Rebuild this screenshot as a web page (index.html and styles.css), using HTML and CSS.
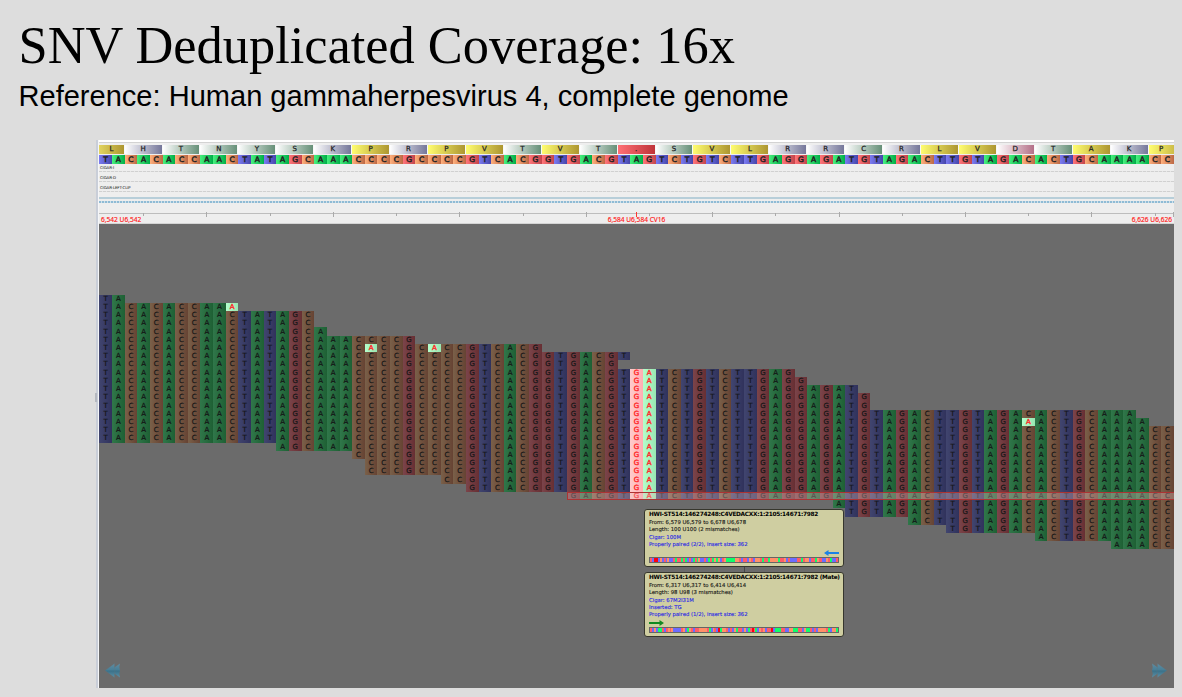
FILE: index.html
```html
<!DOCTYPE html>
<html lang="en">
<head>
<meta charset="utf-8">
<title>SNV Deduplicated Coverage</title>
<link rel="stylesheet" href="styles.css">
</head>
<body>
<header class="heading">
  <h1 class="title">SNV Deduplicated Coverage: 16x</h1>
  <p class="subtitle">Reference: Human gammaherpesvirus 4, complete genome</p>
</header>
<main class="viewer">
  <div class="splitter"><i class="grip"></i></div>
  <div class="content">
    <div class="tracks">
      <div class="topline"></div>
      <div class="aminos" id="aminos"></div>
      <div class="bases" id="bases"></div>
      <div class="cigar">CIGAR-I</div>
      <div class="cigar">CIGAR-D</div>
      <div class="cigar">CIGAR-LEFT-CLIP</div>
      <div class="coverage"></div>
      <div class="coverage-dots"></div>
      <div class="ruler" id="ruler"></div>
      <div class="positions"><span>6,542 U6,542</span><span>6,584 U6,584 CV16</span><span>6,626 U6,626</span></div>
    </div>
    <div class="pileup">
      <div id="reads"></div>
      <div class="cards">
        <section class="card first">
          <h2>HWI-ST514:146274248:C4VEDACXX:1:2105:14671:7982</h2>
          <p>From: 6,579 U6,579 to 6,678 U6,678</p>
          <p>Length: 100 U100 (2 mismatches)</p>
          <p class="blue">Cigar: 100M</p>
          <p class="blue">Properly paired (2/2), insert size: 362</p>
          <svg class="arrow left" viewBox="0 0 15 6"><path d="M15 2H4.500V0L0 3l4.500 3V4H15z" fill="#1b82e6"/></svg>
          <div class="strip" id="strip1"></div>
        </section>
        <div class="link"></div>
        <section class="card second">
          <h2>HWI-ST514:146274248:C4VEDACXX:1:2105:14671:7982 (Mate)</h2>
          <p>From: 6,317 U6,317 to 6,414 U6,414</p>
          <p>Length: 98 U98 (3 mismatches)</p>
          <p class="blue">Cigar: 67M2I31M</p>
          <p class="blue">Inserted: TG</p>
          <p class="blue">Properly paired (1/2), insert size: 362</p>
          <svg class="arrow" viewBox="0 0 15 6"><path d="M0 2H10.500V0L15 3l-4.500 3V4H0z" fill="#138a22"/></svg>
          <div class="strip" id="strip2"></div>
        </section>
      </div>
      <nav class="pager">
        <svg viewBox="0 0 15 15"><defs><linearGradient id="steel" x2="0" y2="1"><stop stop-color="#5f8da2"/><stop offset=".48" stop-color="#477e96"/><stop offset=".52" stop-color="#3a7088"/><stop offset="1" stop-color="#5b91a8"/></linearGradient></defs><path d="M15 .5L5 7.500l10 7-.7-3.500.7-3.500-.7-3.500z" fill="url(#steel)"/><path d="M9.500 .5L0 7.500l9.500 7V11l.5-3.500-.5-3.500z" fill="url(#steel)" stroke="#65757c" stroke-width=".3"/></svg>
        <svg viewBox="0 0 15 15"><path d="M0 .5l10 7-10 7L.7 11 0 7.500.7 4z" fill="url(#steel)"/><path d="M5.500 .5l9.500 7-9.500 7V11L5 7.500 5.500 4z" fill="url(#steel)" stroke="#65757c" stroke-width=".3"/></svg>
      </nav>
    </div>
  </div>
</main>
<script src="app.js"></script>
</body>
</html>
```
FILE: styles.css
```css
* { box-sizing: border-box; }
body { margin: 0; width: 1182px; height: 697px; overflow: hidden; background: #ddd; color: #000; font-family: "Liberation Sans", Arial, sans-serif; }
.heading { height: 140px; padding: 16px 0 0 18.500px; white-space: nowrap; }
.title { margin: 0; font: 400 52.400px/58px "Liberation Serif", "Times New Roman", serif; }
.subtitle { margin: 5px 0 0; font-size: 29.060px; line-height: 34px; }
.viewer { display: flex; width: 1078px; height: 548px; margin-left: 96px; }
.splitter { position: relative; width: 3px; background: linear-gradient(90deg, #c9ced8 0 2px, #f5f6f8 2px 3px); }
.grip { position: absolute; left: -1px; top: 253px; width: 2px; height: 9px; border: 1px solid #b4b8c0; }
.content { width: 1075px; }
.tracks { display: flex; flex-direction: column; height: 84px; background: #eee; border-top: 1px solid #fff; border-bottom: 1px solid #d4d4d4; font-family: "DejaVu Sans", sans-serif; overflow: hidden; }
.topline { height: 4px; background: linear-gradient(#fff 0 1px, #d3d3d3 1px 2px, #eee 2px); flex: none; }
.aminos, .bases, .read { display: grid; grid-template-columns: repeat(85, 12.643px); padding-left: .35px; }
.aminos { height: 8.500px; margin-bottom: 1.500px; flex: none; }
.aminos span, .bases span { display: flex; justify-content: center; align-items: center; font: 400 7px/8px "DejaVu Sans", sans-serif; color: #222; -webkit-text-stroke: .25px #222; }
.aminos span { border-right: 1px solid #f8f8f8; }
.bases { height: 9px; flex: none; }
.bases span { font-size: 7.500px; -webkit-text-stroke: .5px #222; }
.yellow { background: linear-gradient(90deg, #fffd70, #ad9631); }
.aminos .yellow:first-child { background: linear-gradient(90deg, #e2d460, #ad9631); }
.aminos .yellow:last-child { background: linear-gradient(90deg, #fffd70, #cdbd48); border: 0; }
.green { background: linear-gradient(90deg, #fff, #669078); }
.slate { background: linear-gradient(90deg, #fff, #75779a); }
.pink { background: linear-gradient(90deg, #fff, #b47088); }
.stop { background: linear-gradient(90deg, #ff7075, #bf3339); }
.bases .A { background: linear-gradient(90deg, #48f07f, #00ae48); }
.bases .C { background: linear-gradient(90deg, #ffb07d, #bc6844); }
.bases .G { background: linear-gradient(90deg, #ff757a, #c3454b); }
.bases .T { background: linear-gradient(90deg, #7b7bf2, #4545aa); }
.cigar { height: 9.900px; flex: none; padding: 1px 0 0 1px; font-size: 3.900px; line-height: 6px; letter-spacing: -.1px; color: #111; background: repeating-linear-gradient(90deg, #d0d0d0 0 3px, #e6e6e6 3px 4px) 0 7px / 100% 1px no-repeat; }
.coverage { height: 2px; margin-top: 3.300px; background: #b7ced9; flex: none; }
.coverage-dots { height: 2px; margin-top: 2px; flex: none; background: repeating-linear-gradient(90deg, #8fbbd5 0 2px, #d0e0e9 2px 3px); }
.ruler { position: relative; height: 4px; margin-top: 10px; border-top: 1px solid #bdbdbd; flex: none; }
.tick { position: absolute; top: -1px; width: 1px; height: 3px; background: #aaa; }
.tick.major { top: -2px; height: 5px; }
.tick.current { background: #f33; top: -2px; height: 5px; }
.positions { display: flex; justify-content: space-between; padding: 0 2px; color: #ff2020; font: 6.600px/6px "Noto Sans", sans-serif; -webkit-text-stroke: .15px #ff2020; white-space: nowrap; }
.pileup { position: relative; height: 464px; padding-top: 70.600px; background: #6b6b6b; }
.read { position: relative; height: 8.220px; }
.read span { display: flex; align-items: center; justify-content: center; font: 400 7px/8px "DejaVu Sans", sans-serif; color: #141516; -webkit-text-stroke: .2px currentColor; overflow: hidden; }
.read .A { background: linear-gradient(90deg, #30774a, #1e6034); }
.read .C { background: linear-gradient(90deg, #7a6049, #664333); }
.read .G { background: linear-gradient(90deg, #7b444a, #672f33); }
.read .T { background: linear-gradient(90deg, #41456f, #30325c); }
.read .snv { color: #ff2b2b; -webkit-text-stroke: .4px #ff2b2b; }
.read .snv.A { background: linear-gradient(90deg, #b4ffcc, #98e6b2); }
.read .snv.G { background: linear-gradient(90deg, #ffcccc, #ffadb2); }
.read.selected::after { content: ""; position: absolute; left: 467.500px; right: 0; top: 0; bottom: 0; background: rgba(230, 190, 190, .35); border: 1px solid #ad3334; border-right: 0; }
.cards { position: absolute; left: 545px; top: 285px; width: 200px; font-family: "DejaVu Sans", sans-serif; }
.card { display: flex; flex-direction: column; background: #cfcea1; border: 1px solid #36362d; border-radius: 3px; padding: 1px 4px 3px 4px; white-space: nowrap; }
.first { height: 58px; }
.second { height: 65px; }
.link { width: 1px; height: 5px; margin-left: 100px; background: #454545; }
.card h2 { margin: 0 0 .5px; font-size: 5.800px; line-height: 7.400px; letter-spacing: -.276px; }
.card p { margin: 0; font-size: 5.300px; line-height: 7.300px; color: #111; -webkit-text-stroke: .1px currentColor; }
.card p.blue { color: #1c1ce6; }
.arrow { width: 15px; height: 6px; margin-top: auto; flex: none; }
.arrow.left { align-self: flex-end; }
.strip { display: flex; height: 6px; border: 1px solid #666; margin-top: 1px; flex: none; }
.strip i { flex: 1; }
.strip .A { background: #0fff6a; }
.strip .C { background: #ff9168; }
.strip .G { background: #ff5c68; }
.strip .T { background: #6c6cff; }
.strip .X { background: #ff0010; }
.pager { position: absolute; left: 6px; right: 7px; bottom: 10px; display: flex; justify-content: space-between; }
.pager svg { width: 15px; height: 15px; }
```
FILE: app.js
```js
const codons = ['TA','CAC','ACC','AAC','TAT','AGC','AAA','CCC','CGC','CCC','GTC','ACG','GTG','ACG','TAG','TCT','GTC','TTG','AGG','AGA','TGT','AGA','CTT','GTA','GAC','ACT','GCA','AAA','CC'];
const genome = codons.join('');
const acids = 'LHTNYSKPRPVTVT.SVLRRCRLVDTAKP';
const shade = a => 'LPVA'.includes(a) ? 'yellow' : 'HKR'.includes(a) ? 'slate' : a === 'D' ? 'pink' : a === '.' ? 'stop' : 'green';
const pitch = 12.643;

document.getElementById('aminos').innerHTML = [...acids].map((a, i) =>
  `<span class="${shade(a)}" style="grid-column:span ${codons[i].length}">${a}</span>`).join('');
document.getElementById('bases').innerHTML = [...genome].map(b => `<span class="${b}">${b}</span>`).join('');

let ticks = '';
for (let c = 3; c < 85; c += 5) {
  ticks += `<i class="tick${c % 10 === 8 ? ' major' : ''}" style="left:${(c + .5) * pitch}px"></i>`;
}
ticks += `<i class="tick current" style="left:${42.5 * pitch - .5}px"></i><i class="tick major" style="left:1074px"></i>`;
document.getElementById('ruler').innerHTML = ticks;

// Each entry: last column of the run, then the first or last covered row.
const tops = [[1,0],[10,1],[16,2],[17,4],[24,5],[34,6],[41,7],[54,9],[55,10],[59,11],[60,12],[81,14],[82,15],[84,16]];
const ends = [[13,17],[19,18],[20,19],[26,21],[28,22],[36,23],[57,24],[58,25],[63,26],[66,27],[73,28],[79,29],[84,30]];
const at = (runs, c) => runs.find(r => c <= r[0])[1];
const variants = { '1,10': 'A', '6,21': 'A', '6,26': 'A', '15,73': 'A' };
let rows = '';
for (let r = 0; r <= 30; r++) {
  let cells = '';
  for (let c = 0; c < 85; c++) {
    if (r < at(tops, c) || r > at(ends, c) || (r === 8 && c === 41)) continue;
    let v = variants[r + ',' + c];
    if (c === 42) v = 'G';
    if (c === 43) v = 'A';
    const b = v || genome[c];
    cells += `<span class="${b}${v ? ' snv' : ''}" style="grid-column:${c + 1}">${b}</span>`;
  }
  rows += `<div class="read${r === 24 ? ' selected' : ''}">${cells}</div>`;
}
document.getElementById('reads').innerHTML = rows;

// Miniature read maps; X marks a mismatch.
const paint = (id, s) => {
  document.getElementById(id).innerHTML = [...s].map(b => `<i class="${b}"></i>`).join('');
};
paint('strip1', 'GT' + 'X'.repeat(2) + genome.slice(44, 80) + 'AAAACCGTGGTCGTCCCGAGGACCCCAGGCTGTTTTGGAGCCTGGACGGTTCGATTG');
paint('strip2', 'GTCTAAGTGCGCTTTTGCTACGTGGCCCCGATCGTXACCGTGTCAGGTCTAGXGATCGCTGGXTAAAGGTTCCAAAGGTCAAGTGTCCCCGATCCA');
```
